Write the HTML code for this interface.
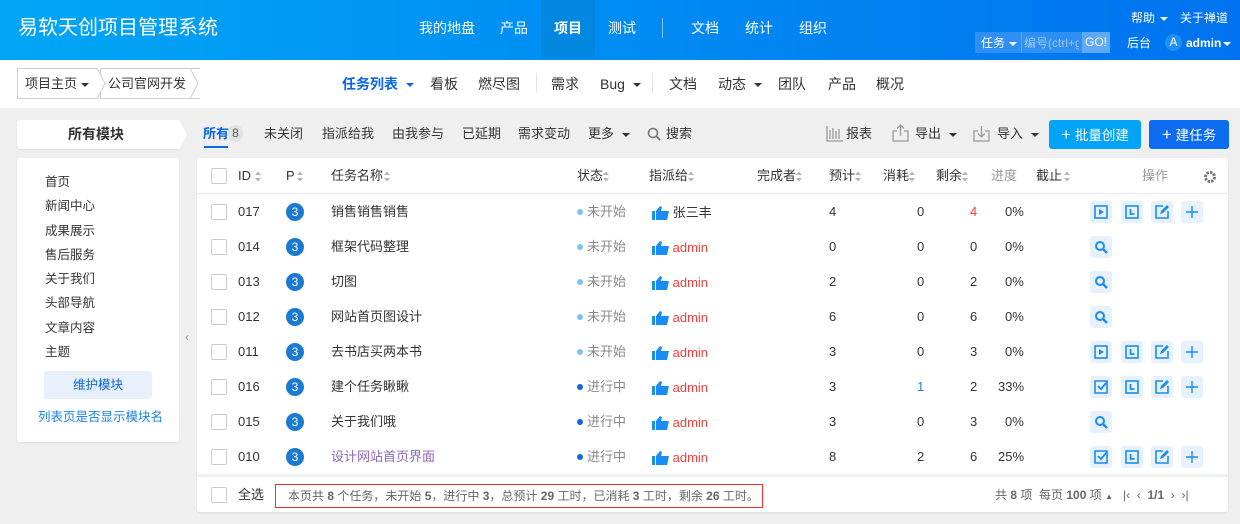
<!DOCTYPE html><html><head><meta charset="utf-8"><style>
*{box-sizing:border-box;margin:0;padding:0}
body{width:1240px;height:524px;background:#efefef;font-family:"Liberation Sans","Noto Sans CJK SC",sans-serif;font-size:13px;color:#333;position:relative;overflow:hidden}
.a{position:absolute;white-space:nowrap;line-height:16px}
#hd{position:absolute;left:0;top:0;width:1240px;height:60px;background:linear-gradient(90deg,#00a6f6,#0072ef)}
#hd .a{color:#fff}
#nb{position:absolute;left:0;top:60px;width:1240px;height:48px;background:#fff}
.crumb{position:absolute;top:68px;height:31px;border:1px solid #ccd;border-right:none;background:#fff;font-size:13px;line-height:29px;padding-left:7px}
.car{display:inline-block;width:0;height:0;border-left:4px solid transparent;border-right:4px solid transparent;border-top:4px solid #333;vertical-align:middle;margin-left:4px}
.box{position:absolute;background:#fff;border-radius:3px;box-shadow:0 1px 2px rgba(0,0,0,.08)}
.cb{position:absolute;width:16px;height:16px;border:1px solid #ccc;border-radius:2px;background:#fff}
.pr{position:absolute;width:18px;height:18px;border-radius:9px;background:#1b7bd3;color:#fff;font-size:12px;line-height:18px;text-align:center}
.st{color:#888}
.dot{display:inline-block;width:6px;height:6px;border-radius:3px;margin-right:4px;vertical-align:middle;position:relative;top:-1px}
.ob{position:absolute;width:22px;height:22px;background:#e7f1fc;border-radius:3px}
.ob svg{position:absolute;left:3px;top:3px}
.red{color:#f23d3d}
.h svg{vertical-align:middle;position:relative;top:-1px}
</style></head><body>
<div id="hd">
<div class="a" style="left:18px;top:16px;font-size:20px;line-height:24px">易软天创项目管理系统</div>
<div class="a" style="left:541px;top:0;width:54px;height:58px;background:#0288e0"></div>
<div class="a" style="left:419px;top:20px;font-size:14px">我的地盘</div>
<div class="a" style="left:500px;top:20px;font-size:14px">产品</div>
<div class="a" style="left:554px;top:20px;font-size:14px;font-weight:bold">项目</div>
<div class="a" style="left:608px;top:20px;font-size:14px">测试</div>
<div class="a" style="left:662px;top:18px;width:1px;height:20px;background:#8cc8f8"></div>
<div class="a" style="left:691px;top:20px;font-size:14px">文档</div>
<div class="a" style="left:745px;top:20px;font-size:14px">统计</div>
<div class="a" style="left:799px;top:20px;font-size:14px">组织</div>
<div class="a" style="left:1131px;top:10px;font-size:12px">帮助 <span class="car" style="border-top-color:#fff;margin-left:2px"></span></div>
<div class="a" style="left:1180px;top:10px;font-size:12px">关于禅道</div>
<div class="a" style="left:975px;top:32px;width:135px;height:21px;background:#2f8ff2"></div>
<div class="a" style="left:981px;top:35px;font-size:12px">任务 <span class="car" style="border-top-color:#fff;margin-left:1px"></span></div>
<div class="a" style="left:1021px;top:32px;width:1px;height:21px;background:#5aa8f5"></div>
<div class="a" style="left:1024px;top:35px;font-size:12px;color:#9cc8f8!important;width:55px;overflow:hidden">编号(ctrl+g</div>
<div class="a" style="left:1082px;top:32px;width:28px;height:21px;background:#5eaaf5;font-size:12px;line-height:21px;text-align:center">GO!</div>
<div class="a" style="left:1127px;top:35px;font-size:12px">后台</div>
<div class="a" style="left:1165px;top:34px;width:17px;height:17px;border-radius:9px;background:#1e90f5;text-align:center;line-height:17px;font-size:12px">A</div>
<div class="a" style="left:1186px;top:35px;font-size:12px;font-weight:bold">admin<span class="car" style="border-top-color:#fff;margin-left:2px"></span></div>
</div>
<div id="nb"></div>
<div class="crumb" style="left:17px;width:80px">项目主页<span class="car"></span></div>
<div class="crumb" style="left:100px;width:100px">公司官网开发<span class="car"></span></div>
<svg class="a" style="left:90px;top:68px" width="120" height="31"><polyline points="7,0 15,15.5 7,31" fill="#fff" stroke="#ccd"/><polyline points="100,0 108,15.5 100,31" fill="#fff" stroke="#ccd"/></svg>
<div class="a" style="left:342px;top:76px;font-size:14px;color:#0b66e4;font-weight:bold">任务列表 <span class="car" style="border-top-color:#0b66e4"></span></div>
<div class="a" style="left:430px;top:76px;font-size:14px">看板</div>
<div class="a" style="left:478px;top:76px;font-size:14px">燃尽图</div>
<div class="a" style="left:536px;top:73px;width:1px;height:20px;background:#e3e3e3"></div>
<div class="a" style="left:551px;top:76px;font-size:14px">需求</div>
<div class="a" style="left:600px;top:76px;font-size:14px">Bug <span class="car"></span></div>
<div class="a" style="left:652px;top:73px;width:1px;height:20px;background:#e3e3e3"></div>
<div class="a" style="left:669px;top:76px;font-size:14px">文档</div>
<div class="a" style="left:718px;top:76px;font-size:14px">动态 <span class="car"></span></div>
<div class="a" style="left:778px;top:76px;font-size:14px">团队</div>
<div class="a" style="left:828px;top:76px;font-size:14px">产品</div>
<div class="a" style="left:876px;top:76px;font-size:14px">概况</div>

<div class="box" style="left:17px;top:120px;width:162px;height:29px;font-weight:bold;font-size:14px;text-align:center;line-height:29px;padding-right:4px">所有模块</div>
<svg class="a" style="left:178px;top:120px" width="10" height="29"><polygon points="0,0 1,0 9,14.5 1,29 0,29" fill="#fff"/></svg>
<div class="box" style="left:17px;top:158px;width:162px;height:284px"></div>
<div class="a" style="left:45px;top:170px;line-height:24.3px;font-size:12.5px;white-space:normal">首页<br>新闻中心<br>成果展示<br>售后服务<br>关于我们<br>头部导航<br>文章内容<br>主题</div>
<div class="a" style="left:44px;top:371px;width:108px;height:28px;background:#e8f0fb;border-radius:3px;color:#0c64d7;text-align:center;line-height:28px;font-size:12.5px">维护模块</div>
<div class="a" style="left:38px;top:409px;color:#1b82e2;font-size:12.5px">列表页是否显示模块名</div>
<div class="a" style="left:185px;top:329px;color:#999;font-size:12px">‹</div>

<div class="a" style="left:203px;top:126px;color:#0b66e4;font-weight:bold">所有</div>
<div class="a" style="left:228px;top:125px;width:15px;height:17px;border-radius:8px;background:#e2e2e2;font-size:12px;text-align:center;line-height:17px;color:#555">8</div>
<div class="a" style="left:204px;top:146px;width:24px;height:2px;background:#0b66e4"></div>
<div class="a" style="left:264px;top:126px">未关闭</div>
<div class="a" style="left:322px;top:126px">指派给我</div>
<div class="a" style="left:392px;top:126px">由我参与</div>
<div class="a" style="left:462px;top:126px">已延期</div>
<div class="a" style="left:518px;top:126px">需求变动</div>
<div class="a" style="left:588px;top:126px">更多 <span class="car"></span></div>
<svg class="a" style="left:647px;top:127px" width="14" height="14"><circle cx="6" cy="6" r="4.5" fill="none" stroke="#777" stroke-width="1.6"/><line x1="9.3" y1="9.3" x2="13" y2="13" stroke="#777" stroke-width="1.8"/></svg>
<div class="a" style="left:666px;top:126px">搜索</div>
<svg class="a" style="left:826px;top:125px" width="18" height="17"><path d="M1 1V16H17M4 5v9M7 3v11M10 6v8M13 4v10" stroke="#999" fill="none" stroke-width="1.3"/></svg>
<div class="a" style="left:846px;top:126px">报表</div>
<svg class="a" style="left:892px;top:124px" width="17" height="18"><path d="M5 7H1V17H16V7h-4M8.5 12V1M5 4.5l3.5-3.5 3.5 3.5" stroke="#999" fill="none" stroke-width="1.3"/></svg>
<div class="a" style="left:915px;top:126px">导出 <span class="car"></span></div>
<svg class="a" style="left:973px;top:124px" width="17" height="18"><path d="M5 7H1V17H16V7h-4M8.5 2V13M5 9.5l3.5 3.5 3.5-3.5" stroke="#999" fill="none" stroke-width="1.3"/></svg>
<div class="a" style="left:997px;top:126px">导入 <span class="car"></span></div>
<div class="a" style="left:1049px;top:120px;width:92px;height:29px;background:#00a3f5;border-radius:3px;color:#fff;line-height:29px;text-align:center;font-size:13.5px"><b style="font-size:17px;font-weight:normal">+</b> 批量创建</div>
<div class="a" style="left:1149px;top:120px;width:80px;height:29px;background:#0b6cf0;border-radius:3px;color:#fff;line-height:29px;text-align:center;font-size:13.5px"><b style="font-size:17px;font-weight:normal">+</b> 建任务</div>

<div class="box" style="left:197px;top:158px;width:1031px;height:354px"></div>
<div class="a" style="left:197px;top:193px;width:1031px;height:1px;background:#e8ebf3"></div>
<div class="a" style="left:197px;top:474px;width:1031px;height:3px;background:#eef0f4"></div>
<div class="cb" style="left:211px;top:168px"></div>
<div class="a" style="left:238px;top:168px">ID</div>
<div class="a" style="left:286px;top:168px">P</div>
<div class="a" style="left:331px;top:168px">任务名称</div>
<div class="a" style="left:577px;top:168px">状态</div>
<div class="a" style="left:649px;top:168px">指派给</div>
<div class="a" style="left:757px;top:168px">完成者</div>
<div class="a" style="left:829px;top:168px">预计</div>
<div class="a" style="left:883px;top:168px">消耗</div>
<div class="a" style="left:936px;top:168px">剩余</div>
<div class="a" style="left:991px;top:168px;color:#999">进度</div>
<div class="a" style="left:1036px;top:168px">截止</div>
<div class="a" style="left:1142px;top:168px;color:#999">操作</div>
<svg class="a" style="left:1203px;top:170px" width="14" height="14"><circle cx="7" cy="7" r="4.5" fill="none" stroke="#777" stroke-width="3" stroke-dasharray="2.4 1.1"/><circle cx="7" cy="7" r="2" fill="#fff"/></svg>
<svg class="a" style="left:0;top:0" width="1240" height="524">
<g fill="#b0b4bc">
<path d="M255 175l3-3.5 3 3.5zM255 178l3 3.5 3-3.5z"/><path d="M297 175l3-3.5 3 3.5zM297 178l3 3.5 3-3.5z"/><path d="M384 175l3-3.5 3 3.5zM384 178l3 3.5 3-3.5z"/><path d="M603 175l3-3.5 3 3.5zM603 178l3 3.5 3-3.5z"/><path d="M688 175l3-3.5 3 3.5zM688 178l3 3.5 3-3.5z"/><path d="M796 175l3-3.5 3 3.5zM796 178l3 3.5 3-3.5z"/><path d="M855 175l3-3.5 3 3.5zM855 178l3 3.5 3-3.5z"/><path d="M909 175l3-3.5 3 3.5zM909 178l3 3.5 3-3.5z"/><path d="M962 175l3-3.5 3 3.5zM962 178l3 3.5 3-3.5z"/><path d="M1064 175l3-3.5 3 3.5zM1064 178l3 3.5 3-3.5z"/>
</g></svg>

<div class="cb" style="left:211px;top:204px"></div><div class="a" style="left:238px;top:204px">017</div><div class="pr" style="left:286px;top:203px">3</div><div class="a" style="left:331px;top:204px">销售销售销售</div><div class="a st" style="left:577px;top:204px"><span class="dot" style="background:#7cc3f8"></span>未开始</div><div class="a h" style="left:652px;top:205px"><svg width="17" height="14"><path d="M0 5h3v9H0zM4 5l4-5 2 1-1 4h8l-2 9H4z" fill="#1a8df0"/></svg> 张三丰</div><div class="a" style="left:829px;top:204px">4</div><div class="a" style="left:917px;top:204px">0</div><div class="a red" style="left:970px;top:204px">4</div><div class="a" style="left:1005px;top:204px">0%</div>
<div class="cb" style="left:211px;top:239px"></div><div class="a" style="left:238px;top:239px">014</div><div class="pr" style="left:286px;top:238px">3</div><div class="a" style="left:331px;top:239px">框架代码整理</div><div class="a st" style="left:577px;top:239px"><span class="dot" style="background:#7cc3f8"></span>未开始</div><div class="a red h" style="left:652px;top:240px"><svg width="17" height="14"><path d="M0 5h3v9H0zM4 5l4-5 2 1-1 4h8l-2 9H4z" fill="#1a8df0"/></svg> admin</div><div class="a" style="left:829px;top:239px">0</div><div class="a" style="left:917px;top:239px">0</div><div class="a" style="left:970px;top:239px">0</div><div class="a" style="left:1005px;top:239px">0%</div>
<div class="cb" style="left:211px;top:274px"></div><div class="a" style="left:238px;top:274px">013</div><div class="pr" style="left:286px;top:273px">3</div><div class="a" style="left:331px;top:274px">切图</div><div class="a st" style="left:577px;top:274px"><span class="dot" style="background:#7cc3f8"></span>未开始</div><div class="a red h" style="left:652px;top:275px"><svg width="17" height="14"><path d="M0 5h3v9H0zM4 5l4-5 2 1-1 4h8l-2 9H4z" fill="#1a8df0"/></svg> admin</div><div class="a" style="left:829px;top:274px">2</div><div class="a" style="left:917px;top:274px">0</div><div class="a" style="left:970px;top:274px">2</div><div class="a" style="left:1005px;top:274px">0%</div>
<div class="cb" style="left:211px;top:309px"></div><div class="a" style="left:238px;top:309px">012</div><div class="pr" style="left:286px;top:308px">3</div><div class="a" style="left:331px;top:309px">网站首页图设计</div><div class="a st" style="left:577px;top:309px"><span class="dot" style="background:#7cc3f8"></span>未开始</div><div class="a red h" style="left:652px;top:310px"><svg width="17" height="14"><path d="M0 5h3v9H0zM4 5l4-5 2 1-1 4h8l-2 9H4z" fill="#1a8df0"/></svg> admin</div><div class="a" style="left:829px;top:309px">6</div><div class="a" style="left:917px;top:309px">0</div><div class="a" style="left:970px;top:309px">6</div><div class="a" style="left:1005px;top:309px">0%</div>
<div class="cb" style="left:211px;top:344px"></div><div class="a" style="left:238px;top:344px">011</div><div class="pr" style="left:286px;top:343px">3</div><div class="a" style="left:331px;top:344px">去书店买两本书</div><div class="a st" style="left:577px;top:344px"><span class="dot" style="background:#7cc3f8"></span>未开始</div><div class="a red h" style="left:652px;top:345px"><svg width="17" height="14"><path d="M0 5h3v9H0zM4 5l4-5 2 1-1 4h8l-2 9H4z" fill="#1a8df0"/></svg> admin</div><div class="a" style="left:829px;top:344px">3</div><div class="a" style="left:917px;top:344px">0</div><div class="a" style="left:970px;top:344px">3</div><div class="a" style="left:1005px;top:344px">0%</div>
<div class="cb" style="left:211px;top:379px"></div><div class="a" style="left:238px;top:379px">016</div><div class="pr" style="left:286px;top:378px">3</div><div class="a" style="left:331px;top:379px">建个任务瞅瞅</div><div class="a st" style="left:577px;top:379px"><span class="dot" style="background:#0b66e4"></span>进行中</div><div class="a red h" style="left:652px;top:380px"><svg width="17" height="14"><path d="M0 5h3v9H0zM4 5l4-5 2 1-1 4h8l-2 9H4z" fill="#1a8df0"/></svg> admin</div><div class="a" style="left:829px;top:379px">3</div><div class="a" style="left:917px;top:379px;color:#1b82e2">1</div><div class="a" style="left:970px;top:379px">2</div><div class="a" style="left:998px;top:379px">33%</div>
<div class="cb" style="left:211px;top:414px"></div><div class="a" style="left:238px;top:414px">015</div><div class="pr" style="left:286px;top:413px">3</div><div class="a" style="left:331px;top:414px">关于我们哦</div><div class="a st" style="left:577px;top:414px"><span class="dot" style="background:#0b66e4"></span>进行中</div><div class="a red h" style="left:652px;top:415px"><svg width="17" height="14"><path d="M0 5h3v9H0zM4 5l4-5 2 1-1 4h8l-2 9H4z" fill="#1a8df0"/></svg> admin</div><div class="a" style="left:829px;top:414px">3</div><div class="a" style="left:917px;top:414px">0</div><div class="a" style="left:970px;top:414px">3</div><div class="a" style="left:1005px;top:414px">0%</div>
<div class="cb" style="left:211px;top:449px"></div><div class="a" style="left:238px;top:449px">010</div><div class="pr" style="left:286px;top:448px">3</div><div class="a" style="left:331px;top:449px;color:#8a68b8">设计网站首页界面</div><div class="a st" style="left:577px;top:449px"><span class="dot" style="background:#0b66e4"></span>进行中</div><div class="a red h" style="left:652px;top:450px"><svg width="17" height="14"><path d="M0 5h3v9H0zM4 5l4-5 2 1-1 4h8l-2 9H4z" fill="#1a8df0"/></svg> admin</div><div class="a" style="left:829px;top:449px">8</div><div class="a" style="left:917px;top:449px">2</div><div class="a" style="left:970px;top:449px">6</div><div class="a" style="left:998px;top:449px">25%</div>

<svg style="display:none"><defs>
<g id="play"><rect x="2" y="2" width="12" height="12" fill="none" stroke="#1a8df0" stroke-width="1.6"/><path d="M6 5l5 3-5 3z" fill="#1a8df0"/></g>
<g id="clk"><rect x="2" y="2" width="12" height="12" fill="none" stroke="#1a8df0" stroke-width="1.6"/><path d="M6.5 5v5h4" fill="none" stroke="#1a8df0" stroke-width="1.8"/></g>
<g id="edit"><path d="M9 2H2v12h12V7" fill="none" stroke="#1a8df0" stroke-width="1.6"/><path d="M6 10l1-3 6-6 2 2-6 6z" fill="#1a8df0"/></g>
<g id="plus"><path d="M8 2v12M2 8h12" stroke="#1a8df0" stroke-width="1.4"/></g>
<g id="srch"><circle cx="7" cy="7" r="4" fill="none" stroke="#1a8df0" stroke-width="2"/><path d="M10 10l4 4" stroke="#1a8df0" stroke-width="2.4"/></g>
<g id="chk"><path d="M2 2h12v12H2z" fill="none" stroke="#1a8df0" stroke-width="1.6"/><path d="M5 7l3 3 6-7" fill="none" stroke="#1a8df0" stroke-width="1.8"/></g>
</defs></svg>
<div class="ob" style="left:1090px;top:201px"><svg width="16" height="16"><use href="#play"/></svg></div><div class="ob" style="left:1121px;top:201px"><svg width="16" height="16"><use href="#clk"/></svg></div><div class="ob" style="left:1151px;top:201px"><svg width="16" height="16"><use href="#edit"/></svg></div><div class="ob" style="left:1181px;top:201px"><svg width="16" height="16"><use href="#plus"/></svg></div>
<div class="ob" style="left:1090px;top:236px"><svg width="16" height="16"><use href="#srch"/></svg></div>
<div class="ob" style="left:1090px;top:271px"><svg width="16" height="16"><use href="#srch"/></svg></div>
<div class="ob" style="left:1090px;top:306px"><svg width="16" height="16"><use href="#srch"/></svg></div>
<div class="ob" style="left:1090px;top:341px"><svg width="16" height="16"><use href="#play"/></svg></div><div class="ob" style="left:1121px;top:341px"><svg width="16" height="16"><use href="#clk"/></svg></div><div class="ob" style="left:1151px;top:341px"><svg width="16" height="16"><use href="#edit"/></svg></div><div class="ob" style="left:1181px;top:341px"><svg width="16" height="16"><use href="#plus"/></svg></div>
<div class="ob" style="left:1090px;top:376px"><svg width="16" height="16"><use href="#chk"/></svg></div><div class="ob" style="left:1121px;top:376px"><svg width="16" height="16"><use href="#clk"/></svg></div><div class="ob" style="left:1151px;top:376px"><svg width="16" height="16"><use href="#edit"/></svg></div><div class="ob" style="left:1181px;top:376px"><svg width="16" height="16"><use href="#plus"/></svg></div>
<div class="ob" style="left:1090px;top:411px"><svg width="16" height="16"><use href="#srch"/></svg></div>
<div class="ob" style="left:1090px;top:446px"><svg width="16" height="16"><use href="#chk"/></svg></div><div class="ob" style="left:1121px;top:446px"><svg width="16" height="16"><use href="#clk"/></svg></div><div class="ob" style="left:1151px;top:446px"><svg width="16" height="16"><use href="#edit"/></svg></div><div class="ob" style="left:1181px;top:446px"><svg width="16" height="16"><use href="#plus"/></svg></div>

<div class="cb" style="left:211px;top:487px"></div>
<div class="a" style="left:238px;top:487px">全选</div>
<div class="a" style="left:275px;top:484px;width:488px;height:24px;border:1px solid #e33;font-size:12px;color:#666;line-height:22px;padding-left:12px">本页共 <b>8</b> 个任务，未开始 <b>5</b>，进行中 <b>3</b>，总预计 <b>29</b> 工时，已消耗 <b>3</b> 工时，剩余 <b>26</b> 工时。</div>
<div class="a" style="left:995px;top:487px;font-size:12px;color:#666">共 <b>8</b> 项 &nbsp;每页 <b>100</b> 项 <span style="font-size:8px">▲</span> &nbsp; |‹ &nbsp;‹ &nbsp;<b>1/1</b> &nbsp;› &nbsp;›|</div>
</body></html>
